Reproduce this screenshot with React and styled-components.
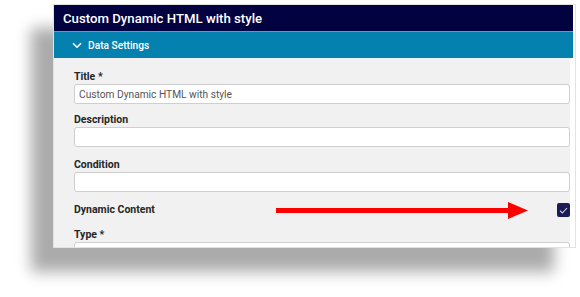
import React from "react";
import styled, { createGlobalStyle } from "styled-components";

const Global = createGlobalStyle`
  html, body { margin: 0; padding: 0; background: #ffffff; }
  body { font-family: Roboto, "Liberation Sans", Arial, sans-serif; }
`;

const Stage = styled.div`
  width: 580px;
  height: 297px;
  overflow: hidden;
  padding: 4px 0 0 53px;
  box-sizing: border-box;
`;

const Panel = styled.div`
  width: 523px;
  height: 244px;
  background: #ffffff;
  border: 1px solid #e2e2e2;
  box-sizing: border-box;
  overflow: hidden;
  display: flex;
  flex-direction: column;
  box-shadow: -22px 24px 14px rgba(0, 0, 0, 0.33);
`;

const TitleBar = styled.div`
  height: 26px;
  flex: none;
  background: #020240;
  color: #ffffff;
  font-size: 13.2px;
  font-weight: 500;
  display: flex;
  align-items: center;
  padding-left: 9px;
  margin-right: 2px;
  border-bottom: 1px solid #8a8aa0;
`;

const SectionBar = styled.div`
  height: 26px;
  flex: none;
  background: #0581b0;
  color: #ffffff;
  font-size: 10.2px;
  font-weight: 500;
  display: flex;
  align-items: center;
  gap: 6px;
  padding-left: 18px;
  margin-right: 2px;
`;

const Body = styled.div`
  flex: 1;
  background: #f1f1f1;
  margin-right: 5px;
  padding: 12px 0 0 20px;
  display: flex;
  flex-direction: column;
`;

const Field = styled.div`
  display: flex;
  flex-direction: column;
  margin-bottom: ${(p) => p.$gap ?? 9}px;
`;

const Label = styled.div`
  font-size: 10.5px;
  font-weight: 700;
  line-height: 14px;
  color: #262626;
`;

const Input = styled.div`
  height: 20px;
  box-sizing: border-box;
  background: #ffffff;
  border: 1px solid #cfcfcf;
  border-radius: 3px;
  font-size: 10.2px;
  color: #555555;
  display: flex;
  align-items: center;
  padding-left: 4px;
  flex: none;
`;

const CheckRow = styled.div`
  position: relative;
  height: 14px;
  display: flex;
  align-items: center;
  justify-content: space-between;
  margin-bottom: 11px;
`;

const Checkbox = styled.div`
  width: 13px;
  height: 14px;
  background: #1b1b55;
  border-radius: 2px;
  display: flex;
  align-items: center;
  justify-content: center;
`;

const Arrow = styled.svg`
  position: absolute;
  left: 202px;
  top: -1px;
`;

export default function App() {
  return (
    <>
      <Global />
      <Stage>
        <Panel>
          <TitleBar>Custom Dynamic HTML with style</TitleBar>
          <SectionBar>
            <svg width="10" height="7" viewBox="0 0 10 7">
              <path d="M1 1.2 L5 5.2 L9 1.2" fill="none" stroke="#fff" strokeWidth="1.6" />
            </svg>
            Data Settings
          </SectionBar>
          <Body>
            <Field>
              <Label>Title *</Label>
              <Input>Custom Dynamic HTML with style</Input>
            </Field>
            <Field $gap={11}>
              <Label>Description</Label>
              <Input />
            </Field>
            <Field $gap={11}>
              <Label>Condition</Label>
              <Input />
            </Field>
            <CheckRow>
              <Label>Dynamic Content</Label>
              <Arrow width="252" height="17" viewBox="0 0 252 17">
                <rect x="0" y="6" width="236" height="5" fill="#ff0000" />
                <polygon points="232,0 252,8.5 232,17" fill="#ff0000" />
              </Arrow>
              <Checkbox>
                <svg width="9" height="7" viewBox="0 0 9 7">
                  <path d="M1 3.6 L3.4 6 L8 1" fill="none" stroke="#d8d8f0" strokeWidth="1.1" />
                </svg>
              </Checkbox>
            </CheckRow>
            <Field>
              <Label>Type *</Label>
              <Input>HTML</Input>
            </Field>
          </Body>
        </Panel>
      </Stage>
    </>
  );
}
